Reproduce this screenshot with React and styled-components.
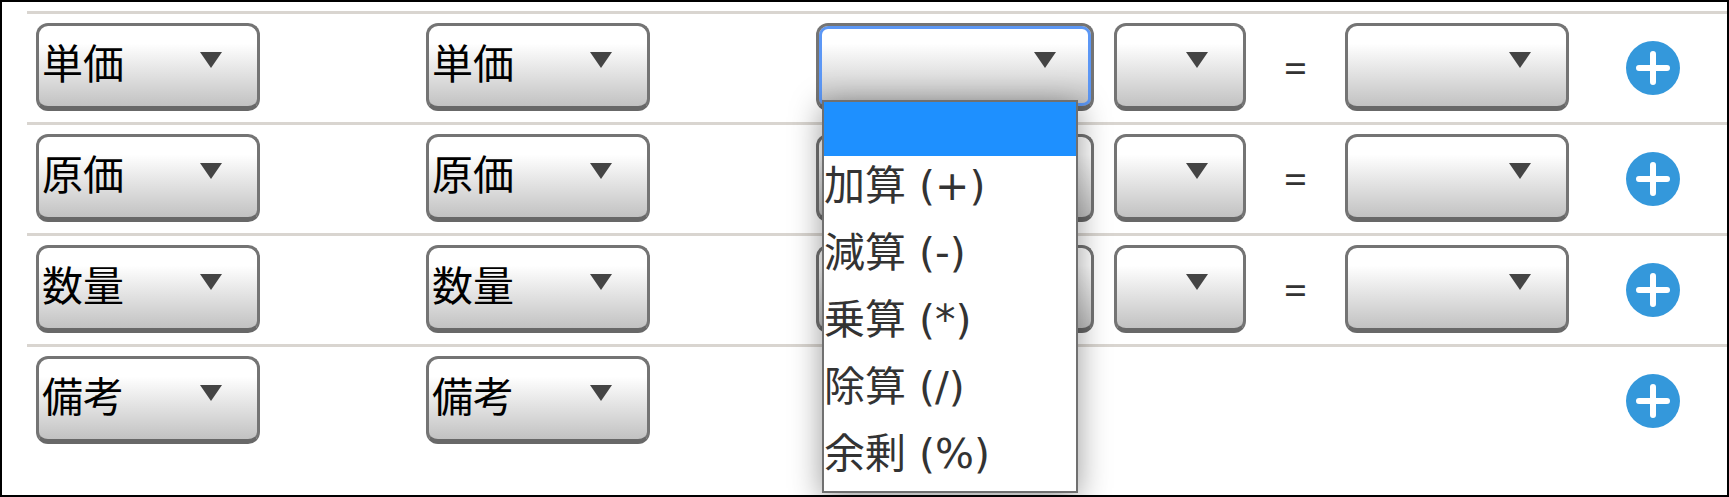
// external dependencies
import React from 'react';
import styled, {createGlobalStyle, css} from 'styled-components';

const FONT = '"Open Sans", "Noto Sans CJK JP", sans-serif';
const OPTION_FONT = '"DejaVu Sans", "Noto Sans CJK JP", sans-serif';

const GlobalStyle = createGlobalStyle`
  *,
  *::before,
  *::after {
    box-sizing: border-box;
  }

  body {
    background-color: #fff;
    margin: 0;
  }
`;

export const Frame = styled.main`
  border: 2px solid #000;
  color: #333;
  font-family: ${FONT};
  font-size: 41px;
  min-height: 100vh;
  overflow: hidden;
  padding: 9px 0 36px 25px;
`;

export const Row = styled.div`
  align-items: center;
  border-top: 3px solid #d9d5d0;
  display: grid;
  grid-template-columns: 390fr 390fr 298fr 132fr 99fr 280fr 102fr;
  padding: 9px 0 11px 9px;
`;

export const Cell = styled.div`
  grid-column: ${({$column}) => $column};
  position: relative;
`;

export const SelectBox = styled.div`
  align-items: start;
  display: grid;
  justify-items: end;
  width: ${({$width}) => $width}px;

  > * {
    grid-area: 1 / 1;
  }
`;

const focusRing = css`
  box-shadow: inset 0 0 0 3px #5c97f5;
`;

export const StyledSelect = styled.select`
  appearance: none;
  background: linear-gradient(#fff 22%, #f4f4f4 36%, #c2c2c2 100%);
  border: 3px solid #747474;
  border-bottom: 5px solid #686868;
  border-radius: 12px;
  color: #000;
  font-family: ${FONT};
  font-size: 41px;
  height: 88px;
  line-height: 60px;
  outline: none;
  padding: 0 60px 6px 3px;
  width: 100%;

  ${({$isOpen}) => $isOpen && focusRing};
`;

export const Arrow = styled.svg`
  display: block;
  height: 16px;
  margin: 29px 38px 0 0;
  pointer-events: none;
  width: 22px;
`;

export const OptionList = styled.ul`
  background-color: #fff;
  border: 2px solid #707070;
  box-shadow: 0 6px 30px rgba(0, 0, 0, 0.4);
  font-family: ${OPTION_FONT};
  left: 6px;
  list-style: none;
  margin: 0;
  padding: 0;
  position: absolute;
  top: 77px;
  width: 256px;
  z-index: 1;
`;

export const OptionItem = styled.li`
  background-color: ${({$isSelected}) => ($isSelected ? '#1e90ff' : '#fff')};
  height: ${({$isSelected}) => ($isSelected ? '54px' : '67px')};
  line-height: 60px;
  white-space: pre;
`;

export const Equals = styled.span`
  line-height: 60px;
  text-align: center;
`;

export const AddButton = styled.button`
  background: none;
  border: 0;
  cursor: pointer;
  display: block;
  grid-column: 7;
  height: 58px;
  padding: 0;
  width: 56px;
`;

const OPERATORS = ['', '加算 (+)', '減算 (-)', '乗算 (*)', '除算 (/)', '余剰 (%)'];

const ROWS = [
  {name: '単価', hasFormula: true, isOpen: true},
  {name: '原価', hasFormula: true},
  {name: '数量', hasFormula: true},
  {name: '備考'}
];

const NAMES = ROWS.map(({name}) => name);

const Select = ({isOpen, label, options, value = '', width}) => (
  <SelectBox $width={width}>
    <StyledSelect
      $isOpen={isOpen}
      aria-label={label}
      defaultValue={value}
    >
      {options.map((option) => (
        <option
          key={option}
          value={option}
        >
          {option}
        </option>
      ))}
    </StyledSelect>

    <Arrow
      aria-hidden="true"
      viewBox="0 0 22 16"
    >
      <path
        d="M0 0H22L11 16Z"
        fill="#444"
      />
    </Arrow>
  </SelectBox>
);

const Formula = ({isOpen, name}) => (
  <>
    <Cell $column={3}>
      <Select
        isOpen={isOpen}
        label={`${name} 演算子`}
        options={OPERATORS}
        width={278}
      />

      {isOpen && (
        <OptionList role="listbox">
          {OPERATORS.map((operator) => (
            <OptionItem
              $isSelected={!operator}
              aria-selected={!operator}
              key={operator}
              role="option"
            >
              {operator}
            </OptionItem>
          ))}
        </OptionList>
      )}
    </Cell>

    <Cell $column={4}>
      <Select
        label={`${name} 値`}
        options={['']}
        width={132}
      />
    </Cell>

    <Equals>=</Equals>

    <Cell $column={6}>
      <Select
        label={`${name} 結果`}
        options={['', ...NAMES]}
        width={224}
      />
    </Cell>
  </>
);

const App = () => (
  <>
    <GlobalStyle />

    <Frame>
      {ROWS.map(({hasFormula, isOpen, name}) => (
        <Row key={name}>
          <Cell $column={1}>
            <Select
              label={`${name} 元の項目`}
              options={NAMES}
              value={name}
              width={224}
            />
          </Cell>

          <Cell $column={2}>
            <Select
              label={`${name} 先の項目`}
              options={NAMES}
              value={name}
              width={224}
            />
          </Cell>

          {hasFormula && (
            <Formula
              isOpen={isOpen}
              name={name}
            />
          )}

          <AddButton
            aria-label={`${name} 追加`}
            type="button"
          >
            <svg
              height="58"
              viewBox="0 0 56 58"
              width="56"
            >
              <circle
                cx="28"
                cy="30"
                fill="#3498db"
                r="27"
              />
              <path
                d="M28 16V44M14 30H42"
                stroke="#fff"
                strokeLinecap="round"
                strokeWidth="6"
              />
            </svg>
          </AddButton>
        </Row>
      ))}
    </Frame>
  </>
);

export default App;
